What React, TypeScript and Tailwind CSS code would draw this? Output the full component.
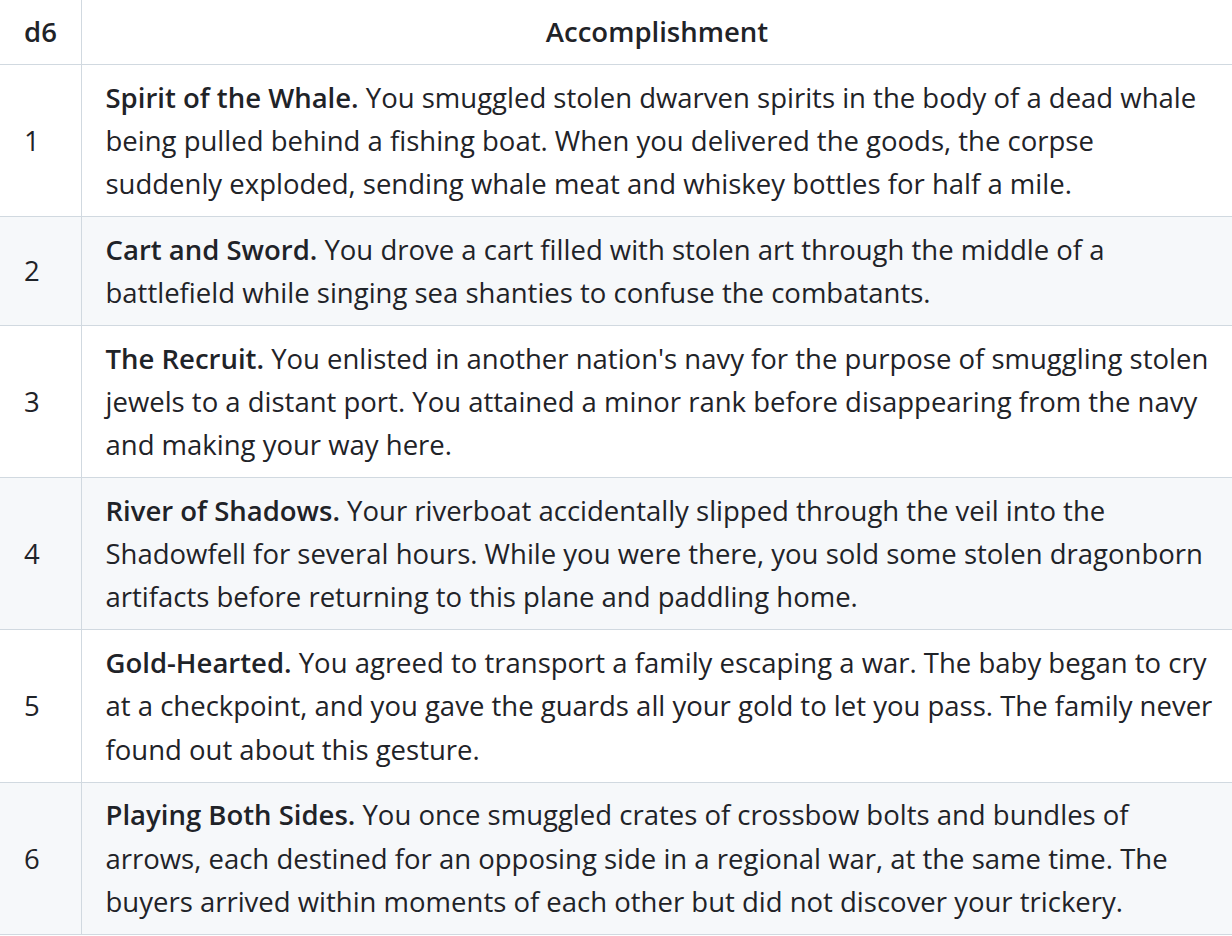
type Row = { n: number; title: string; lines: string[] };

const rows: Row[] = [
  {
    n: 1,
    title: 'Spirit of the Whale.',
    lines: [
      ' You smuggled stolen dwarven spirits in the body of a dead whale',
      'being pulled behind a fishing boat. When you delivered the goods, the corpse',
      'suddenly exploded, sending whale meat and whiskey bottles for half a mile.',
    ],
  },
  {
    n: 2,
    title: 'Cart and Sword.',
    lines: [
      ' You drove a cart filled with stolen art through the middle of a',
      'battlefield while singing sea shanties to confuse the combatants.',
    ],
  },
  {
    n: 3,
    title: 'The Recruit.',
    lines: [
      " You enlisted in another nation's navy for the purpose of smuggling stolen",
      'jewels to a distant port. You attained a minor rank before disappearing from the navy',
      'and making your way here.',
    ],
  },
  {
    n: 4,
    title: 'River of Shadows.',
    lines: [
      ' Your riverboat accidentally slipped through the veil into the',
      'Shadowfell for several hours. While you were there, you sold some stolen dragonborn',
      'artifacts before returning to this plane and paddling home.',
    ],
  },
  {
    n: 5,
    title: 'Gold-Hearted.',
    lines: [
      ' You agreed to transport a family escaping a war. The baby began to cry',
      'at a checkpoint, and you gave the guards all your gold to let you pass. The family never',
      'found out about this gesture.',
    ],
  },
  {
    n: 6,
    title: 'Playing Both Sides.',
    lines: [
      ' You once smuggled crates of crossbow bolts and bundles of',
      'arrows, each destined for an opposing side in a regional war, at the same time. The',
      'buyers arrived within moments of each other but did not discover your trickery.',
    ],
  },
];

export default function App() {
  return (
    <div className="h-[936px] overflow-hidden bg-white font-['Open_Sans',sans-serif] text-[27.5px] leading-[43.2px] text-[#1f2328]">
      <table className="-mt-[2px] -ml-px w-[1234px] table-fixed border-collapse">
        <colgroup>
          <col className="w-[82px]" />
          <col />
        </colgroup>
        <thead>
          <tr className="bg-white">
            <th className="border border-[#d1d9e0] px-[23px] py-[10.8px] text-center font-semibold">d6</th>
            <th className="border border-[#d1d9e0] px-[23px] py-[10.8px] text-center font-semibold">
              Accomplishment
            </th>
          </tr>
        </thead>
        <tbody>
          {rows.map((r) => (
            <tr key={r.n} className={r.n % 2 === 0 ? 'bg-[#f6f8fa]' : 'bg-white'}>
              <td className="border border-[#d1d9e0] px-[24px] py-[10.8px] text-left align-middle">{r.n}</td>
              <td className="whitespace-pre border border-[#d1d9e0] px-[23.5px] py-[10.8px] text-left align-middle">
                {r.lines.map((l, i) => (
                  <span key={i} className="block">
                    {i === 0 && <strong className="font-semibold">{r.title}</strong>}
                    {l}
                  </span>
                ))}
              </td>
            </tr>
          ))}
        </tbody>
      </table>
    </div>
  );
}
